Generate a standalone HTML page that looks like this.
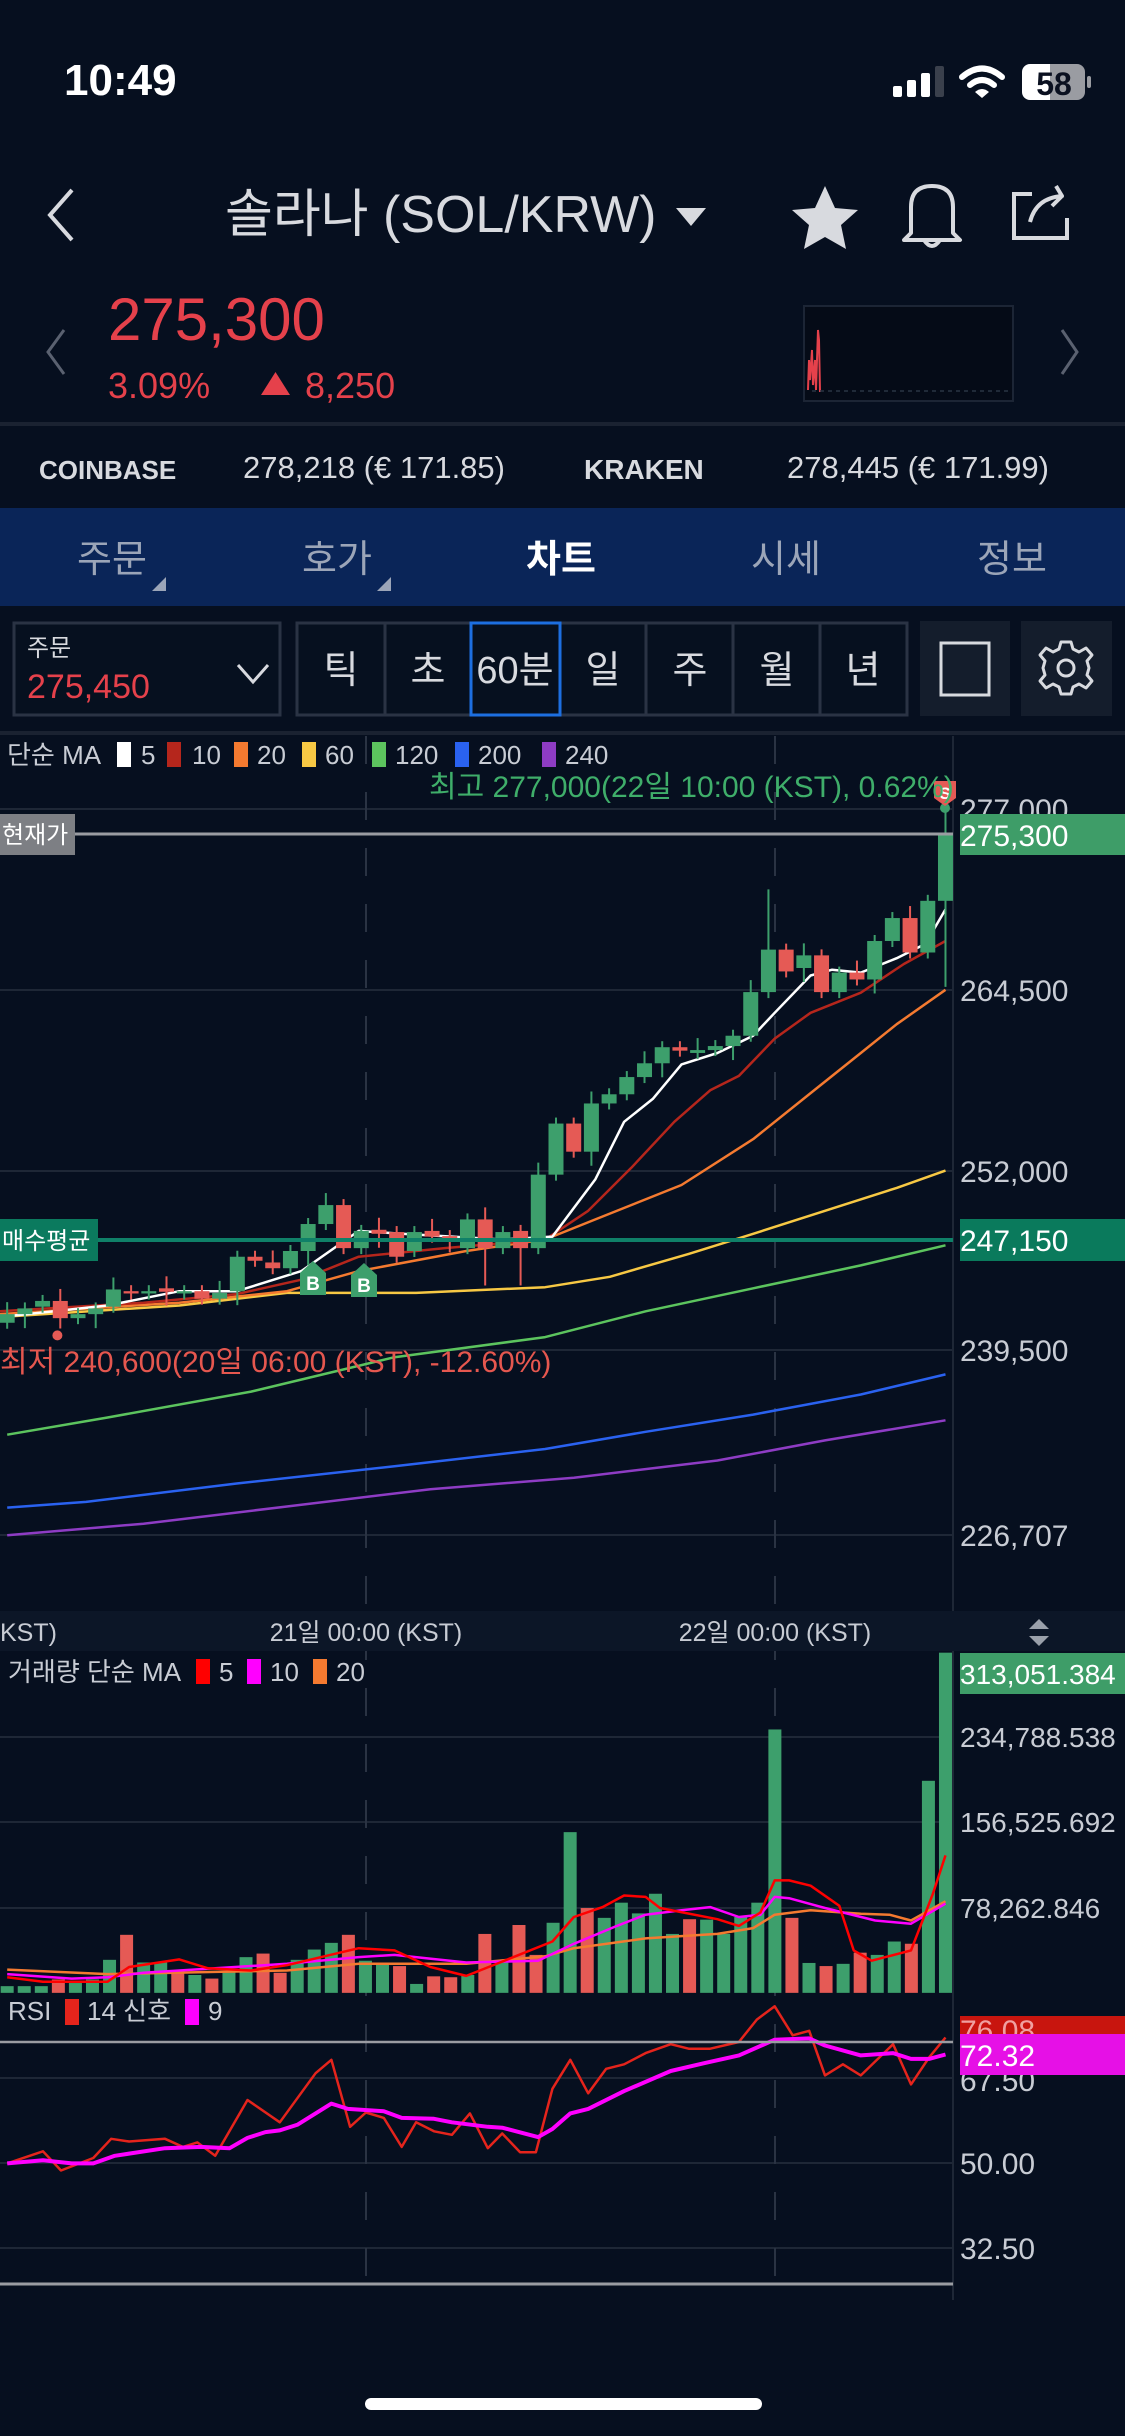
<!DOCTYPE html>
<html><head><meta charset="utf-8">
<style>
html,body{margin:0;padding:0;background:#060f1f;}
body{width:1125px;height:2436px;overflow:hidden;position:relative;}
svg{position:absolute;left:0;top:0;}
text{font-family:"Liberation Sans","Noto Sans CJK KR",sans-serif;}
</style></head>
<body>
<svg id="s" width="1125" height="2436" viewBox="0 0 1125 2436" xmlns="http://www.w3.org/2000/svg">
<rect width="1125" height="2436" fill="#060f1f"/>
<!-- status bar -->
<text x="64" y="95" font-size="44" font-weight="bold" fill="#fff">10:49</text>
<rect x="893" y="86" width="9" height="11" rx="2" fill="#fff"/>
<rect x="907" y="80" width="9" height="17" rx="2" fill="#fff"/>
<rect x="921" y="73" width="9" height="24" rx="2" fill="#fff"/>
<rect x="935" y="66" width="9" height="31" rx="2" fill="#3a404c"/>
<path d="M962 77 Q982 60 1002 77" stroke="#fff" stroke-width="6" fill="none" stroke-linecap="round"/>
<path d="M970 85 Q982 75 994 85" stroke="#fff" stroke-width="6" fill="none" stroke-linecap="round"/>
<path d="M975 92 L982 98 L989 92 Q982 86 975 92Z" fill="#fff"/>
<rect x="1022" y="64" width="37" height="36" rx="8" fill="#fff"/>
<rect x="1050" y="64" width="35" height="36" rx="8" fill="#9a9ca2"/>
<rect x="1050" y="64" width="9" height="36" fill="#9a9ca2"/>
<rect x="1087" y="76" width="4" height="12" rx="2" fill="#9a9ca2"/>
<text x="1054" y="95" font-size="32" font-weight="bold" fill="#0a1020" text-anchor="middle">58</text>
<!-- nav -->
<path d="M72 190 L50 215 L72 240" stroke="#d8dadf" stroke-width="4" fill="none"/>
<text x="225" y="232" font-size="52" fill="#d8dadf">솔라나 (SOL/KRW)</text>
<path d="M676 208 L706 208 L691 226Z" fill="#d8dadf"/>
<path d="M825 186 L835 208 L858 210 L841 225 L846 249 L825 237 L804 249 L809 225 L792 210 L815 208Z" fill="#d8dadf"/>
<path d="M911 233 L911 207 Q911 186 932 186 Q953 186 953 207 L953 233 L960 240 L904 240Z" stroke="#d8dadf" stroke-width="4" fill="none" stroke-linejoin="round"/>
<path d="M924 240 Q932 252 940 240" stroke="#d8dadf" stroke-width="4" fill="none"/>
<path d="M1032 194 L1014 194 L1014 238 L1067 238 L1067 218" stroke="#d8dadf" stroke-width="4" fill="none"/>
<path d="M1030 222 Q1036 198 1062 196 L1056 186 M1062 196 L1052 206" stroke="#d8dadf" stroke-width="4" fill="none" stroke-linejoin="round"/>
<!-- price -->
<path d="M64 330 L48 352 L64 374" stroke="#5a6170" stroke-width="3" fill="none"/>
<path d="M1062 330 L1077 352 L1062 374" stroke="#5a6170" stroke-width="3" fill="none"/>
<text x="108" y="340" font-size="60" fill="#e5414b">275,300</text>
<text x="108" y="398" font-size="36" fill="#e5414b">3.09%</text>
<path d="M261 395 L290 395 L275.5 372Z" fill="#e5414b"/>
<text x="305" y="398" font-size="36" fill="#e5414b">8,250</text>
<rect x="804" y="306" width="209" height="95" fill="#050b17" stroke="#1c2535" stroke-width="2"/>
<path d="M808 390 L809 360 L810 380 L812 350 L813 385 L815 360 L816 390 L818 330 L819 340 L820 392" stroke="#e5414b" stroke-width="2" fill="none"/>
<line x1="812" y1="391" x2="1010" y2="391" stroke="#2a3444" stroke-dasharray="4 4" stroke-width="1.5"/>
<rect x="0" y="422" width="1125" height="4" fill="#1a2231"/>
<!-- exchanges -->
<text x="39" y="479" font-size="26" font-weight="bold" fill="#d8dadf">COINBASE</text>
<text x="243" y="478" font-size="31" fill="#d8dadf">278,218 (€ 171.85)</text>
<text x="584" y="479" font-size="28" font-weight="bold" fill="#d8dadf">KRAKEN</text>
<text x="787" y="478" font-size="31" fill="#d8dadf">278,445 (€ 171.99)</text>
<!-- tabs -->
<rect x="0" y="508" width="1125" height="98" fill="#0a2558"/>
<g font-size="38" text-anchor="middle">
<text x="112" y="572" fill="#9ba5b8">주문</text>
<text x="337" y="572" fill="#9ba5b8">호가</text>
<text x="561" y="572" fill="#ffffff" font-weight="bold">차트</text>
<text x="786" y="572" fill="#9ba5b8">시세</text>
<text x="1012" y="572" fill="#9ba5b8">정보</text>
</g>
<path d="M152 591 L166 591 L166 577Z" fill="#9ba5b8"/>
<path d="M377 591 L391 591 L391 577Z" fill="#9ba5b8"/>
<!-- toolbar -->
<rect x="14" y="623" width="266" height="92" fill="#06101f" stroke="#2a3344" stroke-width="3"/>
<text x="27" y="656" font-size="24" fill="#d8dadf">주문</text>
<text x="27" y="698" font-size="34" fill="#e5414b">275,450</text>
<path d="M238 665 L253 682 L268 665" stroke="#d8dadf" stroke-width="3" fill="none"/>
<rect x="297" y="623" width="610" height="92" fill="#06101f" stroke="#2a3344" stroke-width="3"/>
<g stroke="#2a3344" stroke-width="3">
<line x1="385" y1="623" x2="385" y2="715"/><line x1="471" y1="623" x2="471" y2="715"/><line x1="560" y1="623" x2="560" y2="715"/><line x1="646" y1="623" x2="646" y2="715"/><line x1="733" y1="623" x2="733" y2="715"/><line x1="820" y1="623" x2="820" y2="715"/>
</g>
<rect x="471" y="623" width="89" height="92" fill="none" stroke="#1d6fe0" stroke-width="3"/>
<g font-size="38" fill="#d8dadf" text-anchor="middle">
<text x="341" y="683">틱</text><text x="428" y="683">초</text><text x="515" y="683">60분</text><text x="603" y="683">일</text><text x="690" y="683">주</text><text x="777" y="683">월</text><text x="863" y="683">년</text>
</g>
<rect x="920" y="621" width="90" height="95" fill="#141d2c"/>
<rect x="941" y="643" width="48" height="52" fill="none" stroke="#d8dadf" stroke-width="3"/>
<rect x="1021" y="621" width="91" height="95" fill="#141d2c"/>
<g transform="translate(1066,668)" fill="none" stroke="#d8dadf" stroke-width="3">
<path d="M-5 -26 L5 -26 L7 -19 L13 -16 L20 -20 L26 -13 L21 -7 L23 0 L21 7 L26 13 L20 20 L13 16 L7 19 L5 26 L-5 26 L-7 19 L-13 16 L-20 20 L-26 13 L-21 7 L-23 0 L-21 -7 L-26 -13 L-20 -20 L-13 -16 L-7 -19Z" stroke-linejoin="round"/>
<circle r="8"/>
</g>
<rect x="0" y="731" width="1125" height="4" fill="#1a2231"/>
<!-- chart grid -->
<g id="grid" stroke="#1e2736" stroke-width="2">
<line x1="0" y1="809" x2="953" y2="809"/><line x1="0" y1="990" x2="953" y2="990"/><line x1="0" y1="1171" x2="953" y2="1171"/><line x1="0" y1="1350" x2="953" y2="1350"/><line x1="0" y1="1535" x2="953" y2="1535"/>
<line x1="0" y1="1737" x2="953" y2="1737"/><line x1="0" y1="1822" x2="953" y2="1822"/><line x1="0" y1="1908" x2="953" y2="1908"/>
<line x1="0" y1="2078" x2="953" y2="2078"/><line x1="0" y1="2163" x2="953" y2="2163"/><line x1="0" y1="2248" x2="953" y2="2248"/>
<line x1="953" y1="736" x2="953" y2="2300"/>
</g>
<g stroke="#2a3343" stroke-width="2" stroke-dasharray="28 28">
<line x1="366" y1="736" x2="366" y2="2300"/><line x1="775" y1="736" x2="775" y2="2300"/>
</g>
<rect x="0" y="1611" width="1125" height="40" fill="#0c1627"/>
<g id="dyn"></g>
<!-- legend -->
<text x="7" y="764" font-size="26" fill="#c8ccd4">단순 MA</text>
<rect x="117" y="742" width="14" height="25" fill="#fff"/><text x="141" y="764" font-size="26" fill="#c8ccd4">5</text>
<rect x="167" y="742" width="14" height="25" fill="#b5261c"/><text x="192" y="764" font-size="26" fill="#c8ccd4">10</text>
<rect x="234" y="742" width="14" height="25" fill="#f47a30"/><text x="257" y="764" font-size="26" fill="#c8ccd4">20</text>
<rect x="302" y="742" width="14" height="25" fill="#f7c844"/><text x="325" y="764" font-size="26" fill="#c8ccd4">60</text>
<rect x="372" y="742" width="14" height="25" fill="#5cc45e"/><text x="395" y="764" font-size="26" fill="#c8ccd4">120</text>
<rect x="455" y="742" width="14" height="25" fill="#2a62f0"/><text x="478" y="764" font-size="26" fill="#c8ccd4">200</text>
<rect x="542" y="742" width="14" height="25" fill="#8e3cc4"/><text x="565" y="764" font-size="26" fill="#c8ccd4">240</text>
<text x="429" y="797" font-size="30" fill="#3fae6a">최고 277,000(22일 10:00 (KST), 0.62%)</text>
<text x="0" y="1372" font-size="30" fill="#e5574f">최저 240,600(20일 06:00 (KST), -12.60%)</text>
<!-- price labels -->
<g font-size="30" fill="#c8ccd4">
<text x="960" y="820">277,000</text>
<text x="960" y="1001">264,500</text>
<text x="960" y="1182">252,000</text>
<text x="960" y="1361">239,500</text>
<text x="960" y="1546">226,707</text>
</g>
<line x1="75" y1="834" x2="953" y2="834" stroke="#9a9ca2" stroke-width="3"/>
<rect x="0" y="814" width="75" height="41" fill="#7d7f84"/>
<text x="2" y="843" font-size="24" fill="#fff">현재가</text>
<rect x="960" y="814" width="165" height="41" fill="#3e9d68"/>
<text x="960" y="846" font-size="30" fill="#fff">275,300</text>
<line x1="98" y1="1240" x2="953" y2="1240" stroke="#0f8068" stroke-width="4"/>
<rect x="0" y="1219" width="98" height="42" fill="#0b7a5e"/>
<text x="2" y="1249" font-size="24" fill="#fff">매수평균</text>
<rect x="960" y="1219" width="165" height="42" fill="#0a7a5c"/>
<text x="960" y="1251" font-size="30" fill="#fff">247,150</text>
<!-- time axis -->
<g font-size="25" fill="#c8ccd4">
<text x="0" y="1641">KST)</text>
<text x="366" y="1641" text-anchor="middle">21일 00:00 (KST)</text>
<text x="775" y="1641" text-anchor="middle">22일 00:00 (KST)</text>
</g>
<path d="M1029 1629 L1039 1619 L1049 1629Z M1029 1636 L1039 1646 L1049 1636Z" fill="#9aa0aa"/>
<!-- volume legend -->
<text x="8" y="1681" font-size="26" fill="#c8ccd4">거래량 단순 MA</text>
<rect x="196" y="1659" width="14" height="25" fill="#f00"/><text x="219" y="1681" font-size="26" fill="#c8ccd4">5</text>
<rect x="247" y="1659" width="14" height="25" fill="#f0f"/><text x="270" y="1681" font-size="26" fill="#c8ccd4">10</text>
<rect x="313" y="1659" width="14" height="25" fill="#f47a30"/><text x="336" y="1681" font-size="26" fill="#c8ccd4">20</text>
<rect x="960" y="1653" width="165" height="41" fill="#3e9d68"/>
<text x="960" y="1684" font-size="28" fill="#fff">313,051.384</text>
<g font-size="28" fill="#c8ccd4">
<text x="960" y="1747">234,788.538</text>
<text x="960" y="1832">156,525.692</text>
<text x="960" y="1918">78,262.846</text>
</g>
<!-- RSI -->
<text x="8" y="2020" font-size="26" fill="#c8ccd4">RSI</text>
<rect x="65" y="1999" width="14" height="26" fill="#e5241c"/><text x="87" y="2020" font-size="26" fill="#c8ccd4">14 신호</text>
<rect x="185" y="1999" width="14" height="26" fill="#f0f"/><text x="208" y="2020" font-size="26" fill="#c8ccd4">9</text>
<line x1="0" y1="2042" x2="953" y2="2042" stroke="#9a9ca2" stroke-width="2.5"/>
<line x1="0" y1="2284" x2="953" y2="2284" stroke="#9a9ca2" stroke-width="3"/>
<text x="960" y="2091" font-size="30" fill="#c8ccd4">67.50</text>
<rect x="960" y="2016" width="165" height="20" fill="#c8150e"/>
<text x="960" y="2041" font-size="30" fill="#f0a0a0">76.08</text>
<rect x="960" y="2034" width="165" height="41" fill="#e610e6"/>
<text x="960" y="2066" font-size="30" fill="#fff">72.32</text>
<g font-size="30" fill="#c8ccd4">
<text x="960" y="2174">50.00</text>
<text x="960" y="2259">32.50</text>
</g>
<rect x="365" y="2398" width="397" height="12" rx="6" fill="#fff"/>
</svg>
<script>
(function(){
var NS="http://www.w3.org/2000/svg",g=document.getElementById("dyn");
function el(t,a){var e=document.createElementNS(NS,t);for(var k in a)e.setAttribute(k,a[k]);g.appendChild(e);return e;}
function z2(x,y){return [x/1.394,720+y/1.742];}
function z3(x,y){return [x/1.394,1600+y/2.24];}
function line(pts,f,c,w){var d=pts.map(function(p,i){var q=f(p[0],p[1]);return (i?"L":"M")+q[0].toFixed(1)+" "+q[1].toFixed(1);}).join(" ");el("path",{d:d,stroke:c,"stroke-width":w,fill:"none","stroke-linejoin":"round"});}
var G="#3d9f6c",R="#e55a55";
line([[10,1245],[150,1215],[350,1170],[550,1110],[760,1075],[900,1030],[1050,990],[1200,950],[1318,915]],z2,"#5cc45e",2.5);
line([[10,1372],[120,1362],[330,1330],[550,1300],[760,1270],[900,1240],[1050,1210],[1200,1175],[1318,1140]],z2,"#2a62f0",2.5);
line([[10,1420],[200,1400],[400,1370],[600,1340],[800,1320],[1000,1290],[1150,1255],[1318,1220]],z2,"#8e3cc4",2.5);
line([[0,1040],[250,1020],[400,998],[580,998],[760,988],[850,970],[960,930],[1050,895],[1150,855],[1250,815],[1318,785]],z2,"#f7c844",2.5);
line([[0,1035],[250,1015],[400,995],[500,960],[650,925],[760,905],[830,870],[950,810],[1050,730],[1130,650],[1200,580],[1250,530],[1318,470]],z2,"#f47a30",2.5);
line([[0,1030],[200,1015],[330,1000],[420,975],[500,935],[620,920],[760,905],[820,855],[880,780],[940,700],[990,645],[1030,620],[1080,555],[1130,510],[1200,475],[1260,425],[1318,385]],z2,"#b5261c",2.5);
line([[0,1040],[150,1020],[250,995],[330,995],[420,960],[500,890],[560,895],[700,905],[770,900],[800,850],[830,800],[870,700],[910,660],[950,600],[1000,580],[1050,550],[1080,510],[1130,445],[1160,435],[1200,440],[1250,415],[1290,390],[1318,330]],z2,"#ffffff",2.5);
var C=[[1035,1050,G],[1025,1035,G],[1012,1022,G],[1012,1042,R],[1035,1042,G],[1025,1035,G],[992,1022,G],[995,999,R],[995,999,G],[990,996,R],[995,999,G],[995,1008,R],[998,1008,G],[935,995,G],[935,942,R],[945,955,R],[925,955,G],[878,925,G],[845,878,G],[845,920,R],[890,920,G],[888,895,R],[892,935,R],[892,925,G],[890,900,R],[899,903,R],[870,920,G],[870,920,R],[892,920,G],[890,920,R],[792,920,G],[703,792,G],[703,752,R],[668,752,G],[652,668,G],[622,652,G],[598,622,G],[570,598,G],[570,576,R],[575,580,G],[568,575,G],[550,568,G],[474,550,G],[400,474,G],[400,438,R],[410,432,G],[410,474,R],[440,474,G],[440,452,R],[385,452,G],[345,385,G],[345,405,R],[315,405,G],[200,315,G]];
var n=C.length;
for(var i=0;i<n;i++){var zx=10+i*(1318-10)/(n-1),c=C[i];var a=z2(zx,c[0]),b=z2(zx,c[1]);var x=a[0];
var wt=a[1]-(i%3==0?12:6),wb=b[1]+(i%4==1?14:6);if(i==n-1){wt=z2(0,155)[1];wb=z2(0,465)[1];}
if(i==43)wt=z2(0,295)[1];if(i==3)wb=z2(0,1060)[1];if(i==29||i==27)wb=z2(0,985)[1];
el("line",{x1:x,y1:wt,x2:x,y2:wb,stroke:c[2],"stroke-width":2});
el("rect",{x:x-7.5,y:a[1],width:15,height:Math.max(2,b[1]-a[1]),fill:c[2]});}
el("circle",{cx:z2(80,0)[0],cy:z2(0,1072)[1],r:5,fill:R});
[[313,1265],[364,1267]].forEach(function(p){el("path",{d:"M"+(p[0]-13)+" "+(p[1]+8)+" L"+p[0]+" "+(p[1]-4)+" L"+(p[0]+13)+" "+(p[1]+8)+" L"+(p[0]+13)+" "+(p[1]+30)+" L"+(p[0]-13)+" "+(p[1]+30)+"Z",fill:G});var t=el("text",{x:p[0],y:p[1]+25,"font-size":19,"font-weight":"bold",fill:"#fff","text-anchor":"middle"});t.textContent="B";});
el("circle",{cx:945,cy:808,r:5,fill:G});
el("path",{d:"M934 781 L956 781 L956 798 L945 806 L934 798Z",fill:R});
var st=el("text",{x:945,y:799,"font-size":17,"font-weight":"bold",fill:"#fff","text-anchor":"middle"});st.textContent="S";
var V=[[865,G],[865,G],[865,G],[850,R],[858,G],[850,G],[806,G],[750,R],[812,G],[812,G],[830,R],[840,G],[848,R],[830,G],[800,G],[792,R],[835,R],[806,G],[783,G],[768,G],[750,R],[808,G],[812,G],[820,R],[860,G],[843,R],[845,R],[840,G],[748,R],[812,G],[728,R],[795,R],[723,G],[520,G],[690,R],[712,G],[678,G],[702,G],[658,G],[748,G],[715,R],[716,G],[748,G],[710,G],[678,G],[290,G],[712,R],[813,G],[820,R],[815,G],[790,R],[795,G],[765,G],[770,R],[405,G],[118,G]];
var m=V.length,base=z3(0,880)[1];
for(var j=0;j<m;j++){var vx=10+j*(1318-10)/(m-1);var p=z3(vx,V[j][0]);el("rect",{x:p[0]-6.5,y:p[1],width:13,height:base-p[1],fill:V[j][1]});}
line([[10,828],[150,838],[300,833],[400,830],[500,815],[650,815],[760,798],[800,780],[900,758],[1000,748],[1050,735],[1080,705],[1130,695],[1200,703],[1240,705],[1270,718],[1318,675]],z3,"#f47a30",2.5);
line([[10,838],[100,848],[150,845],[200,835],[300,825],[400,815],[500,800],[550,795],[650,812],[750,808],[800,770],[860,730],[900,705],[950,695],[990,688],[1030,710],[1060,705],[1080,665],[1100,668],[1150,690],[1220,718],[1270,725],[1318,680]],z3,"#ff00ff",2.5);
line([[10,845],[60,855],[150,855],[180,822],[250,805],[290,825],[350,830],[400,818],[500,780],[550,785],[600,822],[650,842],[700,810],[770,765],[800,710],[840,688],[870,662],[900,665],[920,690],[1000,715],[1030,730],[1060,700],[1080,628],[1100,628],[1130,640],[1170,685],[1190,785],[1215,808],[1270,785],[1300,660],[1318,572]],z3,"#ff0000",2.5);
line([[10,1262],[60,1235],[85,1278],[130,1250],[155,1207],[180,1213],[230,1207],[255,1225],[275,1215],[300,1245],[345,1120],[390,1170],[440,1060],[462,1030],[488,1180],[510,1148],[535,1160],[560,1225],[580,1170],[605,1190],[630,1198],[655,1150],[680,1228],[700,1195],[725,1237],[747,1237],[770,1095],[795,1030],[820,1105],[845,1050],[870,1040],[900,1015],[935,995],[960,1005],[990,1005],[1030,990],[1055,940],[1080,910],[1105,975],[1128,965],[1150,1065],[1175,1040],[1200,1065],[1245,995],[1270,1085],[1295,1025],[1318,980]],z3,"#e5241c",2.5);
line([[10,1262],[60,1255],[100,1262],[130,1262],[160,1245],[230,1228],[280,1225],[320,1228],[345,1205],[370,1192],[390,1188],[415,1175],[462,1128],[485,1140],[535,1145],[560,1160],[605,1162],[630,1170],[680,1180],[700,1182],[750,1203],[770,1185],[795,1150],[820,1140],[870,1100],[935,1055],[980,1038],[1030,1020],[1080,985],[1128,982],[1150,998],[1200,1020],[1245,1015],[1270,1028],[1295,1028],[1318,1018]],z3,"#ff00ff",4);
})();
</script>
</body></html>
